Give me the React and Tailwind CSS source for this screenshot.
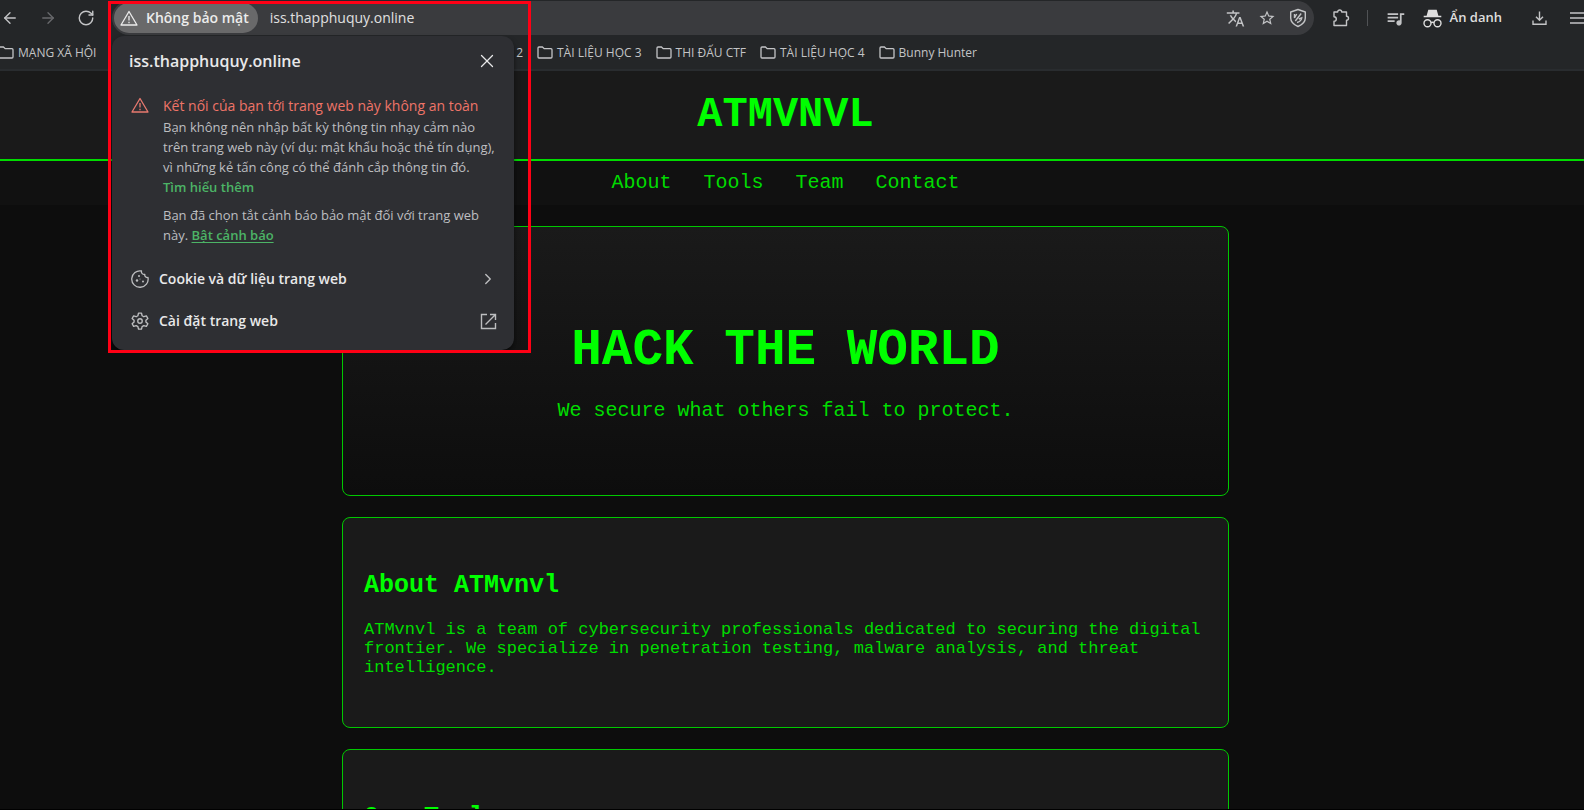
import React from "react";
import { ArrowLeft, ArrowRight, RotateCw, X, ChevronRight } from "lucide-react";
import { MdTranslate, MdOutlineQueueMusic, MdStarBorder } from "react-icons/md";

function Warning({ className }) {
  return (
    <svg viewBox="0 0 18 16" className={className} fill="none" stroke="currentColor" strokeWidth="1.3" aria-hidden="true">
      <path d="M9 1.5 17 15H1Z" strokeLinejoin="round" />
      <path d="M9 6v4.5M9 11.8v1.4" />
    </svg>
  );
}

function Folder() {
  return (
    <svg viewBox="0 0 16 13" className="h-[13px] w-4 shrink-0" fill="none" stroke="currentColor" strokeWidth="1.3" aria-hidden="true">
      <path d="M1 2a1 1 0 0 1 1-1h3.4l1.8 1.7H14a1 1 0 0 1 1 1V11a1 1 0 0 1-1 1H2a1 1 0 0 1-1-1Z" />
    </svg>
  );
}

function BraveShield() {
  return (
    <svg viewBox="0 0 18 20" className="h-5 w-[18px]" fill="none" stroke="currentColor" strokeWidth="1.4" aria-hidden="true">
      <path d="M9 1.5 16.300 4v6c0 4-3.300 6.800-7.300 8.500C5 16.800 1.700 14 1.700 10V4Z" strokeLinejoin="round" />
      <path d="M5.500 6v4l2.200-4M6.300 13l5.900-7.500M8 14.500q4.500-1.200 4.800-4.700l-3 1.200" />
    </svg>
  );
}

function Puzzle() {
  return (
    <svg viewBox="0 0 18 18" className="size-[18px]" fill="none" stroke="currentColor" strokeWidth="1.4" strokeLinejoin="round" aria-hidden="true">
      <path d="M2 3h3.700a2 2 0 0 1 4 0H14.500v4.200a2 2 0 0 1 0 4V16.500H2v-4.200a2.300 2.300 0 0 0 0-4.600Z" />
    </svg>
  );
}

function Incognito() {
  return (
    <svg viewBox="0 0 19 19" className="size-[19px]" fill="none" stroke="currentColor" strokeWidth="1.4" aria-hidden="true">
      <path d="M5.300.7h8.400l1.700 6H3.600ZM.7 6.700h17.600v1.600H.7Z" fill="currentColor" stroke="none" />
      <circle cx="4.500" cy="14.200" r="3.500" />
      <circle cx="14.500" cy="14.200" r="3.500" />
      <path d="M8 13.700q1.500-1 3 0" />
    </svg>
  );
}

function Download() {
  return (
    <svg viewBox="0 0 15 14" className="h-[14px] w-[15px]" fill="none" stroke="currentColor" strokeWidth="1.4" aria-hidden="true">
      <path d="M7.500.5v8.500M4 5.700l3.500 3.500L11 5.700M1 9.500v3.700h13V9.500" />
    </svg>
  );
}

function Cookie() {
  return (
    <svg viewBox="0 0 18 18" className="size-[18px] shrink-0" fill="none" stroke="currentColor" strokeWidth="1.3" aria-hidden="true">
      <path d="M10.500 1A8.200 8.200 0 1 0 17 7.500 2.700 2.700 0 0 1 13.800 4.300 2.700 2.700 0 0 1 10.500 1Z" strokeLinejoin="round" />
      <g fill="currentColor" stroke="none">
        <circle cx="6" cy="10.500" r="1.200" />
        <circle cx="8" cy="6" r="1" />
        <circle cx="12" cy="11.500" r="1" />
        <circle cx="9" cy="9" r=".5" />
      </g>
    </svg>
  );
}

function Gear() {
  return (
    <svg viewBox="0 0 24 24" className="size-[18px] shrink-0" fill="none" stroke="currentColor" strokeWidth="1.800" strokeLinejoin="round" aria-hidden="true">
      <path d="M10 1.500h4l.8 3.500 2.300 1.300 3.400-1.100 2 3.500-2.600 2.400v2.200l2.600 2.400-2 3.500-3.400-1.100-2.300 1.300-.8 3.500h-4l-.8-3.500-2.300-1.300-3.400 1.100-2-3.500 2.600-2.400v-2.200L1.500 8.700l2-3.500 3.400 1.100L9.200 5Z" />
      <circle cx="12" cy="12" r="3" />
    </svg>
  );
}

function External() {
  return (
    <svg viewBox="0 0 17 17" className="size-[17px]" fill="none" stroke="currentColor" strokeWidth="1.4" aria-hidden="true">
      <path d="M7 1.500H1.500v14h14V10M10 1.500h5.500V7M15.500 1.500 5.500 11.500" />
    </svg>
  );
}

function IconButton({ label, className = "", children }) {
  return (
    <button type="button" aria-label={label} className={`flex shrink-0 items-center justify-center ${className}`}>
      {children}
    </button>
  );
}

function Bookmark({ children }) {
  return (
    <a href="#bookmark" className="flex shrink-0 items-center gap-1 whitespace-nowrap">
      <Folder />
      {children}
    </a>
  );
}

function Toolbar() {
  return (
    <div className="border-b-2 border-[#292c2f] bg-[#242628] font-['Open_Sans','Noto_Sans',sans-serif] text-[#c3c4c6]">
      <div className="flex h-9 items-center">
        <IconButton label="Back" className="w-5"><ArrowLeft size={18} strokeWidth={1.8} /></IconButton>
        <IconButton label="Forward" className="ml-[19px] w-[18px] text-[#68696c]"><ArrowRight size={18} strokeWidth={1.8} /></IconButton>
        <IconButton label="Reload" className="ml-5 w-[18px]"><RotateCw size={18} strokeWidth={1.9} /></IconButton>
        <div className="ml-[17px] flex h-[34px] min-w-0 flex-1 items-center rounded-full bg-[#3a3b3e] pl-[2px] pr-[7px]">
          <button type="button" className="flex h-[30px] shrink-0 items-center gap-2 rounded-full bg-[#69696a] pl-[6px] pr-[9px] text-sm font-semibold text-[#ececec]">
            <Warning className="h-4 w-[18px]" />
            Không bảo mật
          </button>
          <input aria-label="Address" defaultValue="iss.thapphuquy.online" className="ml-3 min-w-0 flex-1 bg-transparent text-sm text-[#e0e0e0] outline-none" />
          <div className="flex items-center gap-[13px]">
            <IconButton label="Translate"><MdTranslate size={19} /></IconButton>
            <IconButton label="Bookmark this page"><MdStarBorder size={18} /></IconButton>
            <IconButton label="Shields"><BraveShield /></IconButton>
          </div>
        </div>
        <IconButton label="Extensions" className="ml-[18px]"><Puzzle /></IconButton>
        <div className="mx-[17px] h-4 w-px bg-[#505255]" />
        <IconButton label="Media controls"><MdOutlineQueueMusic size={21} /></IconButton>
        <button type="button" className="ml-[17px] flex shrink-0 items-center gap-2 whitespace-nowrap text-[13px] font-semibold text-[#dedede]">
          <Incognito />
          Ẩn danh
        </button>
        <IconButton label="Downloads" className="ml-[30px]"><Download /></IconButton>
        <IconButton label="Menu" className="ml-[23px]">
          <svg viewBox="0 0 14 12" className="h-3 w-[14px]" stroke="currentColor" strokeWidth="1.4" aria-hidden="true">
            <path d="M0 1h14M0 6h14M0 11h14" />
          </svg>
        </IconButton>
      </div>
      <nav aria-label="Bookmarks" className="-ml-[2px] flex h-[33px] items-center gap-[14px] text-xs">
        <div className="flex w-[525px] shrink-0 items-center justify-between">
          <Bookmark>MẠNG XÃ HỘI</Bookmark>
          <a href="#bookmark">2</a>
        </div>
        <Bookmark>TÀI LIỆU HỌC 3</Bookmark>
        <Bookmark>THI ĐẤU CTF</Bookmark>
        <Bookmark>TÀI LIỆU HỌC 4</Bookmark>
        <Bookmark>Bunny Hunter</Bookmark>
      </nav>
    </div>
  );
}

function SitePopup() {
  return (
    <div className="absolute left-[108px] top-px h-[352px] w-[423px] overflow-hidden border-[3px] border-[#ff0015] pl-px pr-[14px] pt-8">
      <section aria-label="Site information" className="flex h-full flex-col rounded-xl bg-[#2e2f33] px-[17px] pt-[11px] font-['Open_Sans','Noto_Sans',sans-serif] text-[#bdbec0] shadow-md shadow-black/50">
        <div className="flex h-7 items-center justify-between text-[#e8e8e9]">
          <h2 className="text-base font-semibold">iss.thapphuquy.online</h2>
          <IconButton label="Close" className="-mr-px"><X size={22} strokeWidth={1.4} /></IconButton>
        </div>
        <div className="mt-5 flex pl-[2px]">
          <Warning className="mt-[2px] h-4 w-[18px] shrink-0 text-[#e8796f]" />
          <div className="-mr-3 ml-[14px] whitespace-nowrap text-[13px] leading-5">
            <h3 className="text-sm leading-[22px] text-[#ee7468]">Kết nối của bạn tới trang web này không an toàn</h3>
            <p>
              Bạn không nên nhập bất kỳ thông tin nhạy cảm nào<br />
              trên trang web này (ví dụ: mật khẩu hoặc thẻ tín dụng),<br />
              vì những kẻ tấn công có thể đánh cắp thông tin đó.<br />
              <a href="#more" className="font-semibold text-[#4cb466]">Tìm hiểu thêm</a>
            </p>
            <p className="mt-2">
              Bạn đã chọn tắt cảnh báo bảo mật đối với trang web<br />
              này. <a href="#enable" className="font-semibold text-[#4cb466] underline underline-offset-2">Bật cảnh báo</a>
            </p>
          </div>
        </div>
        <div className="mt-[13px] pl-[2px] text-[#bdbec0]">
          <button type="button" className="flex h-[42px] w-full items-center">
            <Cookie />
            <span className="ml-[10px] flex-1 text-left text-sm font-semibold text-[#e8e8e9]">Cookie và dữ liệu trang web</span>
            <ChevronRight size={18} strokeWidth={1.8} />
          </button>
          <button type="button" className="flex h-[42px] w-full items-center">
            <Gear />
            <span className="ml-[10px] flex-1 text-left text-sm font-semibold text-[#e8e8e9]">Cài đặt trang web</span>
            <External />
          </button>
        </div>
      </section>
    </div>
  );
}

const card = "rounded-lg border border-[#00c800]";

export default function App() {
  return (
    <div className="relative flex h-screen flex-col overflow-hidden border-b border-black bg-[#0d0d0d]">
      <Toolbar />
      <div className="min-h-0 flex-1 overflow-hidden font-['Liberation_Mono',monospace] text-[#00dc00]">
        <header className="flex h-[90px] items-center justify-center border-b-2 border-[#00dc00] bg-[#1a1a1a] pr-[13px]">
          <h1 className="text-[42px] font-bold leading-none text-[#00ff00]">ATMVNVL</h1>
        </header>
        <nav aria-label="Site" className="flex h-11 items-center justify-center gap-8 bg-[#111111] pr-[13px] text-xl">
          <a href="#about">About</a>
          <a href="#tools">Tools</a>
          <a href="#team">Team</a>
          <a href="#contact">Contact</a>
        </nav>
        <main className="pr-[13px] pt-[21px]">
          <div className="mx-auto flex max-w-[887px] flex-col gap-[21px]">
            <section className={`${card} bg-linear-to-b from-[#1a1a1a] to-[#0d0d0d] px-[21px] pb-[70px] pt-24 text-center`}>
              <h2 className="text-[51px] font-bold leading-[56px] text-[#00ff00]">HACK THE WORLD</h2>
              <p className="mt-[18px] text-xl">We secure what others fail to protect.</p>
            </section>
            <section id="about" className={`${card} bg-[#1a1a1a] px-[21px] pb-[50px] pt-[54px]`}>
              <h2 className="text-[25px] font-bold leading-7 text-[#00ff00]">About ATMvnvl</h2>
              <p className="mt-5 text-[17px] leading-[19px]">
                ATMvnvl is a team of cybersecurity professionals dedicated to securing the digital frontier. We specialize in penetration testing, malware analysis, and threat intelligence.
              </p>
            </section>
            <section id="tools" className={`${card} bg-[#1a1a1a] px-[21px] pb-[50px] pt-[54px]`}>
              <h2 className="text-[25px] font-bold leading-7 text-[#00ff00]">Our Tools</h2>
            </section>
          </div>
        </main>
      </div>
      <SitePopup />
    </div>
  );
}
